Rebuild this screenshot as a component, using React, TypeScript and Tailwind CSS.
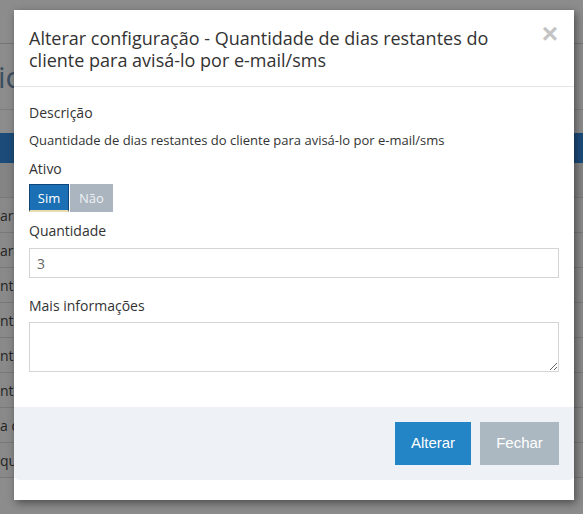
import { useState } from "react";

const rows = ["arâmetros", "arâmetros", "ntegração", "ntegração", "ntervalo", "ntervalo", "a de envio", "quantidade"];

const PageBehind = () => (
  <div className="w-full h-full bg-white font-['Open_Sans',sans-serif] text-[#333]">
    <div className="h-[44px] border-b border-[#d6d6d6]" />
    <div className="h-[66px] border-b border-[#e3e3e3] flex items-center overflow-hidden">
      <span className="text-[30px] leading-[36px] text-[#6c8fb3] -ml-[2px]">ic</span>
    </div>
    <div className="h-[23px]" />
    <div className="h-[30px] bg-[#3489dc]" />
    <div className="h-[35px] bg-[#f0f0f0] border-b border-[#dadada]" />
    {rows.map((r, i) => (
      <div key={i} className="h-[35px] border-b border-[#dadada] flex items-center text-[14px] text-[#444] bg-[#fafafa]">
        {r}
      </div>
    ))}
  </div>
);

const App = () => {
  const [ativo, setAtivo] = useState(true);

  return (
    <div className="relative w-[583px] h-[514px] overflow-hidden">
      <PageBehind />
      {/* backdrop */}
      <div className="absolute inset-0 bg-black/[0.45]" />

      <div className="absolute left-[14px] top-[10px] w-[560px] h-[490px] bg-white shadow-[2px_3px_8px_rgba(0,0,0,0.45)] font-['Open_Sans',sans-serif] text-[#333] flex flex-col">
        <div className="relative border-b border-[#e5e5e5] px-[15px] pt-[17px] pb-[15px]">
          <h4 className="text-[18px] leading-[22px] pr-[40px] text-[#333]">
            Alterar configuração - Quantidade de dias restantes do cliente para avisá-lo por e-mail/sms
          </h4>
          <button className="absolute right-[16px] top-[10px] text-[28px] leading-none font-bold text-[#c4c4c4] font-['Liberation_Sans',sans-serif]">
            ×
          </button>
        </div>

        <div className="px-[15px] pt-[16px] flex-1">
          <div className="text-[14px] leading-[20px]">Descrição</div>
          <div className="text-[13px] leading-[18px] mt-[8px]">
            Quantidade de dias restantes do cliente para avisá-lo por e-mail/sms
          </div>

          <div className="text-[14px] leading-[20px] mt-[10px]">Ativo</div>
          <div className="flex mt-[5px] text-[13px] leading-[16px]">
            <button
              onClick={() => setAtivo(true)}
              className={`w-[40px] h-[28px] border border-[#10477a] border-b-2 border-b-[#e8dcb0] ${ativo ? "bg-[#1a6fb5] text-white" : "bg-[#aab5bf] text-[#eef1f4]"}`}
            >
              Sim
            </button>
            <button
              onClick={() => setAtivo(false)}
              className={`w-[43px] h-[28px] ml-[1px] ${ativo ? "bg-[#aab5bf] text-[#eef1f4]" : "bg-[#1a6fb5] text-white"}`}
            >
              Não
            </button>
          </div>

          <div className="text-[14px] leading-[18px] mt-[10px]">Quantidade</div>
          <input
            defaultValue="3"
            className="block w-full h-[30px] mt-[8px] px-[7px] border border-[#d5d5d5] text-[14px] text-[#666] outline-none"
          />

          <div className="text-[14px] leading-[18px] mt-[19px]">Mais informações</div>
          <textarea className="block w-full h-[50px] mt-[7px] border border-[#d5d5d5] outline-none resize-y" />
        </div>

        <div className="h-[73px] bg-[#eef1f5] rounded-b-[5px] mb-[20px] flex items-center justify-end gap-[9px] pr-[15px] font-['Liberation_Sans',sans-serif] text-[15px] text-white">
          <button className="w-[76px] h-[43px] bg-[#2384c6]">Alterar</button>
          <button className="w-[79px] h-[43px] bg-[#abb8c2]">Fechar</button>
        </div>
      </div>
    </div>
  );
};

export default App;
